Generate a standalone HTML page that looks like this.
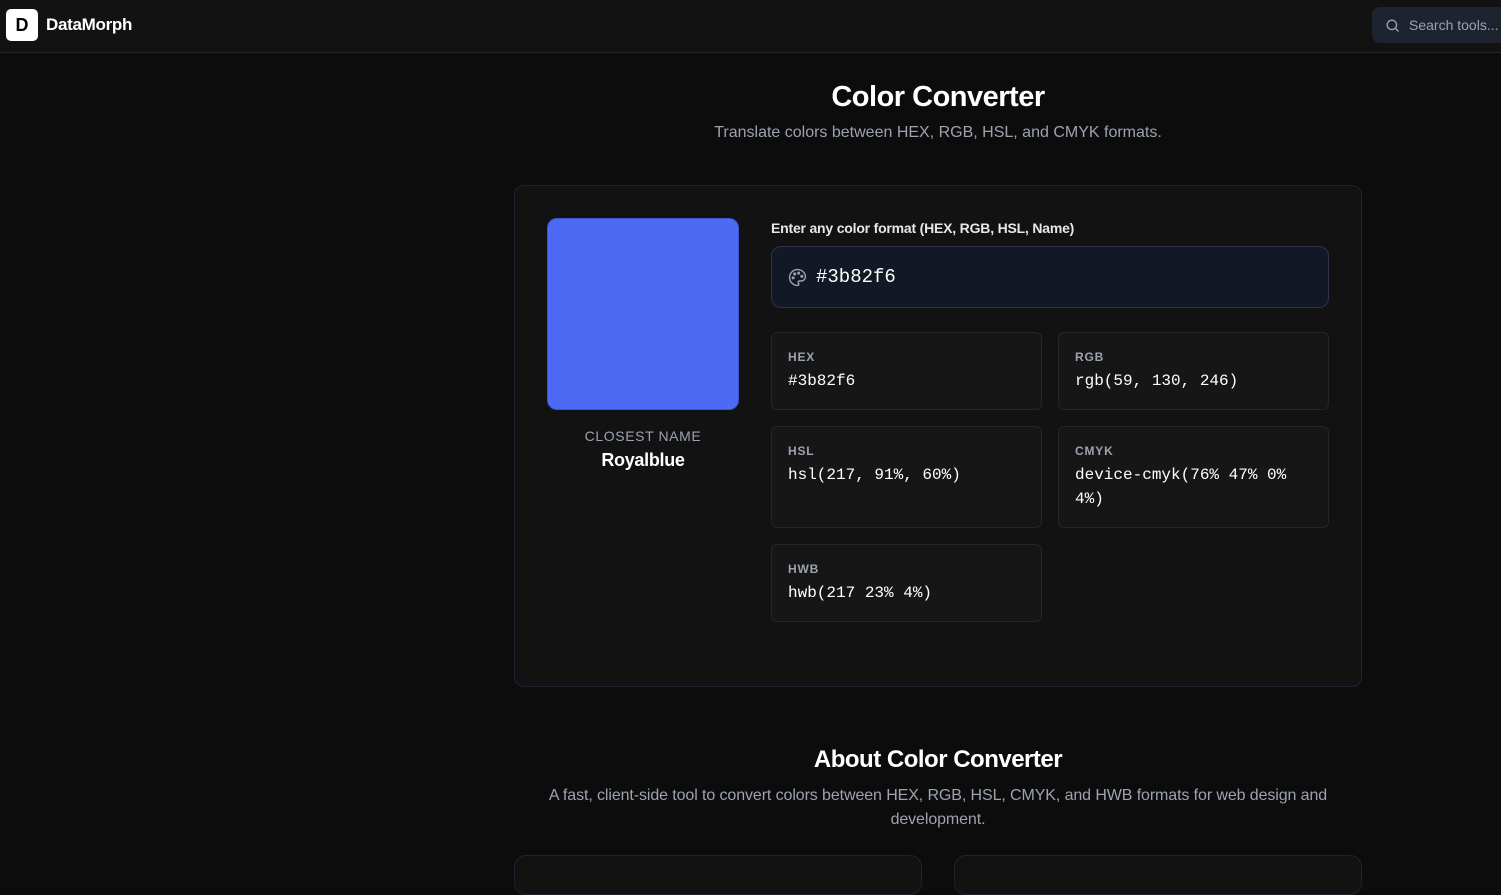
<!DOCTYPE html>
<html><head><meta charset="utf-8"><style>
*{box-sizing:border-box;margin:0;padding:0}
body{width:1501px;height:872px;overflow:hidden;background:#0c0c0d;font-family:"Liberation Sans",sans-serif;color:#fff;position:relative}
.hdr{position:absolute;left:0;top:0;width:1501px;height:53px;background:#121212;border-bottom:1px solid #1f2330}
.logo{position:absolute;left:6px;top:9px;width:32px;height:32px;background:#fff;border-radius:5px;color:#000;font-weight:bold;font-size:18px;text-align:center;line-height:32px}
.brand{position:absolute;left:46px;top:15px;font-size:17px;font-weight:bold;letter-spacing:-0.3px}
.search{position:absolute;left:1372px;top:7px;width:140px;height:36px;background:#1e2330;border-radius:8px;color:#9ca3af;font-size:14px;line-height:36px;padding-left:37px}
.search svg{position:absolute;left:13px;top:11px}
h1{position:absolute;left:0;width:1876px;text-align:center;top:81px;font-size:29px;font-weight:bold;letter-spacing:-0.5px}
.sub{position:absolute;left:0;width:1876px;text-align:center;top:124px;font-size:16px;color:#9ca3af}
.card{position:absolute;left:514px;top:185px;width:848px;height:502px;background:#121212;border:1px solid #1f2330;border-radius:10px}
.sw{position:absolute;left:547px;top:218px;width:192px;height:192px;background:#4c6af4;border-radius:10px;border:1px solid #3a55d0}
.cn{position:absolute;left:547px;width:192px;text-align:center;top:428px;font-size:14px;color:#9ca3af;letter-spacing:0.6px}
.cv{position:absolute;left:547px;width:192px;text-align:center;top:450px;font-size:18px;font-weight:bold;letter-spacing:-0.3px}
.lbl{position:absolute;left:771px;top:220px;font-size:14px;color:#e5e7eb;font-weight:bold;letter-spacing:-0.2px}
.inp{position:absolute;left:771px;top:246px;width:558px;height:62px;background:#131826;border:1px solid #2d3447;border-radius:10px}
.inp svg{position:absolute;left:16px;top:21px}
.inp span{position:absolute;left:44px;top:19px;font-family:"Liberation Mono",monospace;font-size:19px}
.b{position:absolute;background:#161616;border:1px solid #22252e;border-radius:6px;padding:17px 16px}
.b .k{font-size:12px;font-weight:bold;color:#9ca3af;letter-spacing:0.8px}
.b .v{font-family:"Liberation Mono",monospace;font-size:16px;margin-top:5px;line-height:24px}
h2{position:absolute;left:0;width:1876px;text-align:center;top:746px;font-size:24px;font-weight:bold;letter-spacing:-0.5px}
.p2{position:absolute;left:530px;width:816px;text-align:center;top:784px;font-size:16px;color:#9ca3af;line-height:24px;letter-spacing:-0.1px}
.bc{position:absolute;top:855px;height:40px;background:#121212;border:1px solid #1f2330;border-radius:12px}
</style></head><body>
<div class="hdr"><div class="logo">D</div><div class="brand">DataMorph</div>
<div class="search"><svg width="15" height="15" viewBox="0 0 24 24" fill="none" stroke="#9ca3af" stroke-width="2.2" stroke-linecap="round"><circle cx="11" cy="11" r="7.5"/><path d="M21 21l-4.5-4.5"/></svg>Search tools...</div></div>
<h1>Color Converter</h1>
<div class="sub">Translate colors between HEX, RGB, HSL, and CMYK formats.</div>
<div class="card"></div>
<div class="sw"></div>
<div class="cn">CLOSEST NAME</div>
<div class="cv">Royalblue</div>
<div class="lbl">Enter any color format (HEX, RGB, HSL, Name)</div>
<div class="inp"><svg width="19" height="19" viewBox="0 0 24 24" fill="none" stroke="#9ca3af" stroke-width="1.8" stroke-linecap="round" stroke-linejoin="round"><path d="M12 2C6.5 2 2 6.5 2 12s4.5 10 10 10c.9 0 1.6-.7 1.6-1.7 0-.4-.2-.8-.4-1.1-.3-.3-.4-.7-.4-1.1 0-.9.7-1.700 1.7-1.700h2c3 0 5.5-2.5 5.5-5.5C22 6 17.5 2 12 2z"/><circle cx="13.5" cy="6.5" r="1" fill="#9ca3af"/><circle cx="17.5" cy="10.5" r="1" fill="#9ca3af"/><circle cx="8.5" cy="7.5" r="1" fill="#9ca3af"/><circle cx="6.5" cy="12.5" r="1" fill="#9ca3af"/></svg><span>#3b82f6</span></div>
<div class="b" style="left:771px;top:332px;width:271px;height:78px"><div class="k">HEX</div><div class="v">#3b82f6</div></div>
<div class="b" style="left:1058px;top:332px;width:271px;height:78px"><div class="k">RGB</div><div class="v">rgb(59, 130, 246)</div></div>
<div class="b" style="left:771px;top:426px;width:271px;height:102px"><div class="k">HSL</div><div class="v">hsl(217, 91%, 60%)</div></div>
<div class="b" style="left:1058px;top:426px;width:271px;height:102px"><div class="k">CMYK</div><div class="v">device-cmyk(76% 47% 0%<br>4%)</div></div>
<div class="b" style="left:771px;top:544px;width:271px;height:78px"><div class="k">HWB</div><div class="v">hwb(217 23% 4%)</div></div>
<h2>About Color Converter</h2>
<div class="p2">A fast, client-side tool to convert colors between HEX, RGB, HSL, CMYK, and HWB formats for web design and development.</div>
<div class="bc" style="left:514px;width:408px"></div>
<div class="bc" style="left:954px;width:408px"></div>
</body></html>
